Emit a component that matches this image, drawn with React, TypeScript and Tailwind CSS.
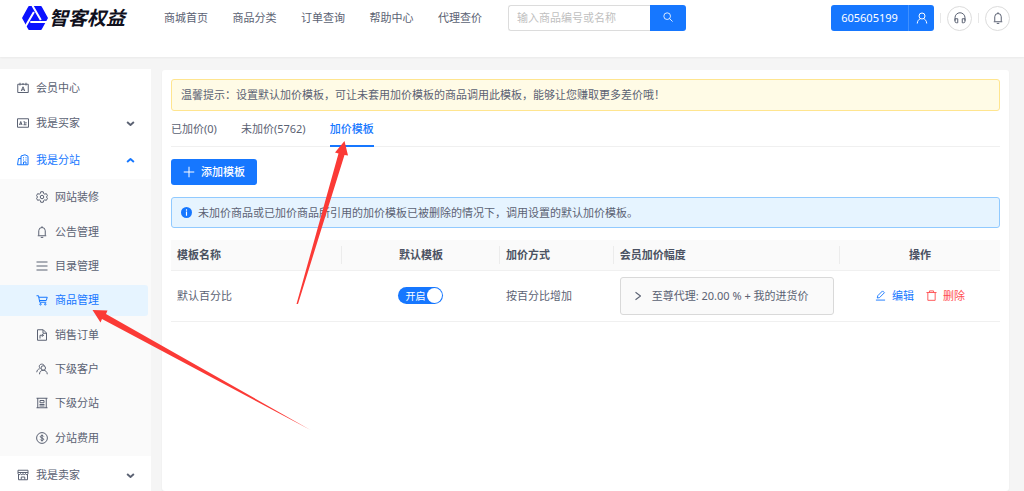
import React, { useState } from "react";

type IconProps = { className?: string; children?: React.ReactNode };

function Icon({ className = "size-3", children }: IconProps) {
  return (
    <svg
      viewBox="0 0 24 24"
      fill="none"
      stroke="currentColor"
      strokeWidth="2"
      strokeLinejoin="round"
      aria-hidden="true"
      className={`shrink-0 ${className}`}
    >
      {children}
    </svg>
  );
}

const glyphs = {
  member: (
    <>
      <path d="M1.5 4.500h21v16.500h-21zM6 1.500V7M12 2v4M18 1.500V7" />
      <path d="M8.500 18 12 9.500l3.500 8.500M10 15.500h4" />
    </>
  ),
  buyer: (
    <>
      <path d="M1 3.500h22v17H1z" />
      <path d="M5 16l2.500-7 2.500 7M6 14h3M13 9.500h2.500v6M13 15.500h6M18 10v3" />
    </>
  ),
  branch: (
    <>
      <path d="M8 21.500V4l8-2.500 6 3v17zM8 9H3L1 21.500h7M12 7.500h2M17 7.500h2M12 12h2M17 12h2M13 21v-5h5v5" />
    </>
  ),
  seller: (
    <>
      <path d="M3 10v11.500h18V10M2 2.500h20v6.500c0 3-4.500 3-5 0 0 3-5 3-5 0 0 3-5 3-5 0-.5 3-5 3-5 0zM2 7h20M8.500 21v-5h7v5" />
    </>
  ),
  gear: (
    <>
      <path d="M9.500 1.500h5l.8 3.500 2.200 1.300 3.200-1 2.300 4.200-2.300 2.500 2.300 2.500-2.300 4.200-3.200-1-2.200 1.300-.8 3.500h-5l-.8-3.500-2.200-1.300-3.200 1L1 14.500 3.300 12 1 9.500l2.300-4.200 3.200 1 2.200-1.300z" />
      <circle cx="12" cy="12" r="3.500" />
    </>
  ),
  bell: <path d="M3.500 19.500h17M5.500 19v-9.500a6.500 6.500 0 0 1 13 0V19M12 .5v3M9.500 22.800h5" />,
  list: <path d="M1 4h22M1 12h22M1 20h22" />,
  cart: (
    <>
      <path d="M1 3.500h4l2.500 13h13M5.500 6.500h17l-2 6.500H7" />
      <circle cx="9" cy="20.500" r="1.500" />
      <circle cx="18.500" cy="20.500" r="1.500" />
    </>
  ),
  file: <path d="M3 1.500h11.500L21 8v14.500H3zM14 2v6.500h6.500M8 19v-6.500h7M12 10l3 2.500-3 3" />,
  customers: (
    <>
      <circle cx="14.500" cy="10" r="4.500" />
      <path d="M7 22.500c0-5 3-8 7.500-8s8 3 8 8M16.500 5.500C15.500 1 7 1 6.500 6.500c0 2 1 3.500 2.500 4.500M1.500 18.500c.5-4 2.500-6.500 6-7" />
    </>
  ),
  sites: <path d="M3.500 2v20M20.500 2v20M1 2.500h22M1 21.500h22M8 7h8v4.500H8zM7 15h10M7 18h10" />,
  dollar: (
    <>
      <circle cx="12" cy="12" r="10.800" />
      <path d="M15.500 9c-.5-2.500-7-2.500-7 .5s7 2 7 5-6.500 3-7 .5M12 5v14" />
    </>
  ),
  user: (
    <>
      <circle cx="12" cy="8" r="6" />
      <path d="M2.500 23c.5-5.500 3-8.500 6.500-9.500M21.500 23c-.5-5.500-3-8.500-6.500-9.500" />
    </>
  ),
  headset: (
    <path d="M2 17.500v-6a10 10 0 0 1 20 0v6M2 13.500h5.500v8H5a3 3 0 0 1-3-3zM22 13.500h-5.500v8H19a3 3 0 0 0 3-3z" />
  ),
  search: (
    <>
      <circle cx="10" cy="10" r="8" />
      <path d="m16 16 7 7" />
    </>
  ),
  plus: <path d="M12 1.500v21M1.500 12h21" />,
  right: <path d="m6 3 12 9-12 9" strokeWidth="2.500" />,
  edit: <path d="M2 22h20M5 17.500l1-5L16.500 2l4 4L10 16.500z" />,
  trash: <path d="M1 5.500h22M7.500 5V2h9v3M4 6v16.500h16V6" />,
  down: <path d="m3 8 9 8 9-8" strokeWidth="5" />,
  up: <path d="m3 16 9-8 9 8" strokeWidth="5" />,
};

const navItems = ["商城首页", "商品分类", "订单查询", "帮助中心", "代理查价"];

const subItems = [
  { label: "网站装修", icon: glyphs.gear },
  { label: "公告管理", icon: glyphs.bell },
  { label: "目录管理", icon: glyphs.list },
  { label: "商品管理", icon: glyphs.cart },
  { label: "销售订单", icon: glyphs.file },
  { label: "下级客户", icon: glyphs.customers },
  { label: "下级分站", icon: glyphs.sites },
  { label: "分站费用", icon: glyphs.dollar },
];

const tabs = ["已加价(0)", "未加价(5762)", "加价模板"];

function Logo() {
  return (
    <a href="#" className="flex w-[142px] shrink-0 items-center gap-px text-[#10101c]">
      <svg viewBox="0 0 26 24" aria-hidden="true" className="h-6 w-[26px] shrink-0">
        <path
          d="M7 .8h12L25.200 12 19 23.200H7L.8 12z"
          fill="#0b12ff"
          stroke="#0b12ff"
          strokeWidth="1.500"
          strokeLinejoin="round"
        />
        <path
          d="M8.300 16H25M11.900 5.900 3.600 20.300M18.800 14.100 10.500-.3"
          fill="none"
          stroke="white"
          strokeWidth="2"
        />
      </svg>
      <span className="text-[19px] leading-6 font-bold whitespace-nowrap italic">智客权益</span>
    </a>
  );
}

function Header() {
  return (
    <header className="flex h-[57px] items-start bg-white pt-[5px] pr-[14px] pl-[22px] shadow-xs">
      <div className="flex h-[26px] w-full items-center">
        <Logo />
        <nav className="flex w-[318px] shrink-0 justify-between">
          {navItems.map((item) => (
            <a key={item} href="#" className="whitespace-nowrap">
              {item}
            </a>
          ))}
        </nav>
        <form className="ml-[26px] flex h-[26px] w-[178px]" onSubmit={(e) => e.preventDefault()}>
          <input
            type="search"
            aria-label="搜索商品"
            placeholder="输入商品编号或名称"
            className="min-w-0 flex-1 rounded-l-[3px] border border-r-0 border-[#dcdcdc] px-2 outline-none placeholder:text-[#bfbfbf]"
          />
          <button
            type="submit"
            aria-label="搜索"
            className="flex w-9 items-center justify-center rounded-r-[3px] bg-[#1677ff] pb-[2px] text-white"
          >
            <Icon className="size-[10px]">{glyphs.search}</Icon>
          </button>
        </form>
        <div className="ml-auto flex shrink-0 items-center">
          <div className="flex h-[26px] rounded-[3px] bg-[#1677ff] text-white">
            <button type="button" className="w-[78px] border-r border-[#3f90ff]">
              605605199
            </button>
            <button type="button" aria-label="账户" className="flex w-[25px] items-center justify-center pb-px">
              <Icon className="size-3">{glyphs.user}</Icon>
            </button>
          </div>
          <span className="mx-[6px] h-[10px] w-px bg-[#e8e8e8]" />
          <button
            type="button"
            aria-label="客服"
            className="flex size-[25px] items-center justify-center rounded-full border border-[#dcdcdc] pb-px"
          >
            <Icon className="size-3">{glyphs.headset}</Icon>
          </button>
          <span className="mx-[6px] h-[10px] w-px bg-[#e8e8e8]" />
          <button
            type="button"
            aria-label="通知"
            className="flex size-[25px] items-center justify-center rounded-full border border-[#dcdcdc] pb-px"
          >
            <Icon className="size-3">{glyphs.bell}</Icon>
          </button>
        </div>
      </div>
    </header>
  );
}

type GroupProps = {
  label: string;
  icon: React.ReactNode;
  arrow?: "up" | "down";
  className: string;
};

function MenuGroup({ label, icon, arrow, className }: GroupProps) {
  return (
    <button type="button" className={`flex w-full items-center gap-[7px] pr-4 pl-[17px] ${className}`}>
      <Icon>{icon}</Icon>
      <span>{label}</span>
      {arrow && <Icon className="ml-auto size-[9px]">{glyphs[arrow]}</Icon>}
    </button>
  );
}

function Sidebar() {
  return (
    <aside className="w-[151px] shrink-0 bg-white">
      <MenuGroup label="会员中心" icon={glyphs.member} className="h-[38px]" />
      <MenuGroup label="我是买家" icon={glyphs.buyer} arrow="down" className="h-8" />
      <MenuGroup label="我是分站" icon={glyphs.branch} arrow="up" className="h-10 pt-[2px] text-[#1677ff]" />
      <ul className="flex h-[277px] flex-col bg-[#fafafa] py-px">
        {subItems.map(({ label, icon }) => (
          <li key={label} className="flex flex-1 pr-[3px]">
            <a
              href="#"
              className={`my-[2px] flex flex-1 items-center gap-[7px] rounded-r-[3px] pl-9 ${
                label === "商品管理" ? "bg-[#e6f4ff] text-[#1677ff]" : ""
              }`}
            >
              <Icon>{icon}</Icon>
              {label}
            </a>
          </li>
        ))}
      </ul>
      <MenuGroup label="我是卖家" icon={glyphs.seller} arrow="down" className="h-[38px]" />
    </aside>
  );
}

function TemplateTable() {
  const [enabled, setEnabled] = useState(true);
  const divider = <span className="absolute top-[6px] right-0 h-[18px] w-px bg-[#ececec]" />;
  return (
    <table className="mt-3 w-full table-fixed border-collapse">
      <colgroup>
        <col className="w-[20.6%]" />
        <col className="w-[19.1%]" />
        <col className="w-[13.7%]" />
        <col className="w-[27.3%]" />
        <col />
      </colgroup>
      <thead>
        <tr className="h-[30px] border-b border-[#f0f0f0] bg-[#fafafa] text-left text-[#4b5262]">
          <th className="relative px-[6px] font-semibold">模板名称{divider}</th>
          <th className="relative px-[6px] text-center font-semibold">默认模板{divider}</th>
          <th className="relative px-[6px] font-semibold">加价方式{divider}</th>
          <th className="relative px-[6px] font-semibold">会员加价幅度{divider}</th>
          <th className="px-[6px] text-center font-semibold">操作</th>
        </tr>
      </thead>
      <tbody>
        <tr className="h-[51px] border-b border-[#f0f0f0]">
          <td className="px-[6px]">默认百分比</td>
          <td className="px-[6px]">
            <label className="mx-auto flex h-[17px] w-[45px] cursor-pointer items-center justify-between rounded-full bg-[#1677ff] pr-px pl-[7px] text-[10px] leading-4 text-white">
              <input
                type="checkbox"
                aria-label="默认模板"
                checked={enabled}
                onChange={(e) => setEnabled(e.target.checked)}
                className="sr-only"
              />
              <span>{enabled ? "开启" : "关闭"}</span>
              <span className="size-[15px] rounded-full bg-white" />
            </label>
          </td>
          <td className="px-[6px]">按百分比增加</td>
          <td className="px-[6px]">
            <button
              type="button"
              className="flex h-[38px] w-full items-center gap-[9px] rounded-[3px] border border-[#d9d9d9] bg-[#fafafa] pl-3"
            >
              <Icon className="size-[10px]">{glyphs.right}</Icon>
              <span className="whitespace-nowrap">至尊代理: 20.00 % + 我的进货价</span>
            </button>
          </td>
          <td className="px-[6px]">
            <div className="flex justify-center gap-3">
              <button type="button" className="flex items-center gap-[6px] text-[#1677ff]">
                <Icon className="size-[11px]">{glyphs.edit}</Icon>
                编辑
              </button>
              <button type="button" className="flex items-center gap-[6px] text-[#ff4d4f]">
                <Icon className="size-[11px]">{glyphs.trash}</Icon>
                删除
              </button>
            </div>
          </td>
        </tr>
      </tbody>
    </table>
  );
}

function Content() {
  const [active, setActive] = useState(tabs[2]);
  return (
    <main className="mt-px mr-[15px] ml-[11px] min-w-0 flex-1 rounded-[3px] bg-white p-[9px] shadow-xs">
      <p className="flex h-8 items-center rounded-[3px] border border-[#ffe58f] bg-[#fffbe6] px-[9px]">
        温馨提示：设置默认加价模板，可让未套用加价模板的商品调用此模板，能够让您赚取更多差价哦！
      </p>
      <div role="tablist" className="flex h-9 gap-6 border-b border-[#f0f0f0]">
        {tabs.map((tab) => (
          <button
            key={tab}
            type="button"
            role="tab"
            aria-selected={tab === active}
            onClick={() => setActive(tab)}
            className={`-mb-px border-b-2 pt-[2px] ${
              tab === active ? "border-[#1677ff] font-medium text-[#1677ff]" : "border-transparent"
            }`}
          >
            {tab}
          </button>
        ))}
      </div>
      <button
        type="button"
        className="mt-3 flex h-[26px] items-center gap-[6px] rounded-[3px] bg-[#1677ff] px-3 font-medium text-white"
      >
        <Icon>{glyphs.plus}</Icon>
        添加模板
      </button>
      <p className="mt-3 flex h-[31px] items-center gap-[6px] rounded-[3px] border border-[#91caff] bg-[#e6f4ff] px-[9px]">
        <svg viewBox="0 0 24 24" aria-hidden="true" className="size-[11px] shrink-0">
          <circle cx="12" cy="12" r="12" fill="#1677ff" />
          <path d="M12 10v9M12 5v3" stroke="white" strokeWidth="2.5" />
        </svg>
        未加价商品或已加价商品所引用的加价模板已被删除的情况下，调用设置的默认加价模板。
      </p>
      <TemplateTable />
    </main>
  );
}

function Arrows() {
  return (
    <svg
      viewBox="0 0 320 440"
      aria-hidden="true"
      className="pointer-events-none absolute top-0 left-0 h-[440px] w-[320px] overflow-visible"
    >
      <g fill="#fb3a36">
        <path d="M344.500 141 335 152.500 338.500 153.500 296.500 304 298 304 344.500 155 348 155.500z" />
        <path d="M92.500 310 107.500 310.500 106 314 310.500 430 102 319 100.500 322.500z" />
      </g>
    </svg>
  );
}

export default function App() {
  return (
    <div className="relative flex h-screen flex-col overflow-hidden bg-[#f5f5f5] font-['Noto_Sans','Noto_Sans_CJK_SC',sans-serif] text-[11px] leading-4 text-[#5b6273]">
      <Header />
      <div className="mt-3 flex min-h-0 flex-1">
        <Sidebar />
        <Content />
      </div>
      <Arrows />
    </div>
  );
}
